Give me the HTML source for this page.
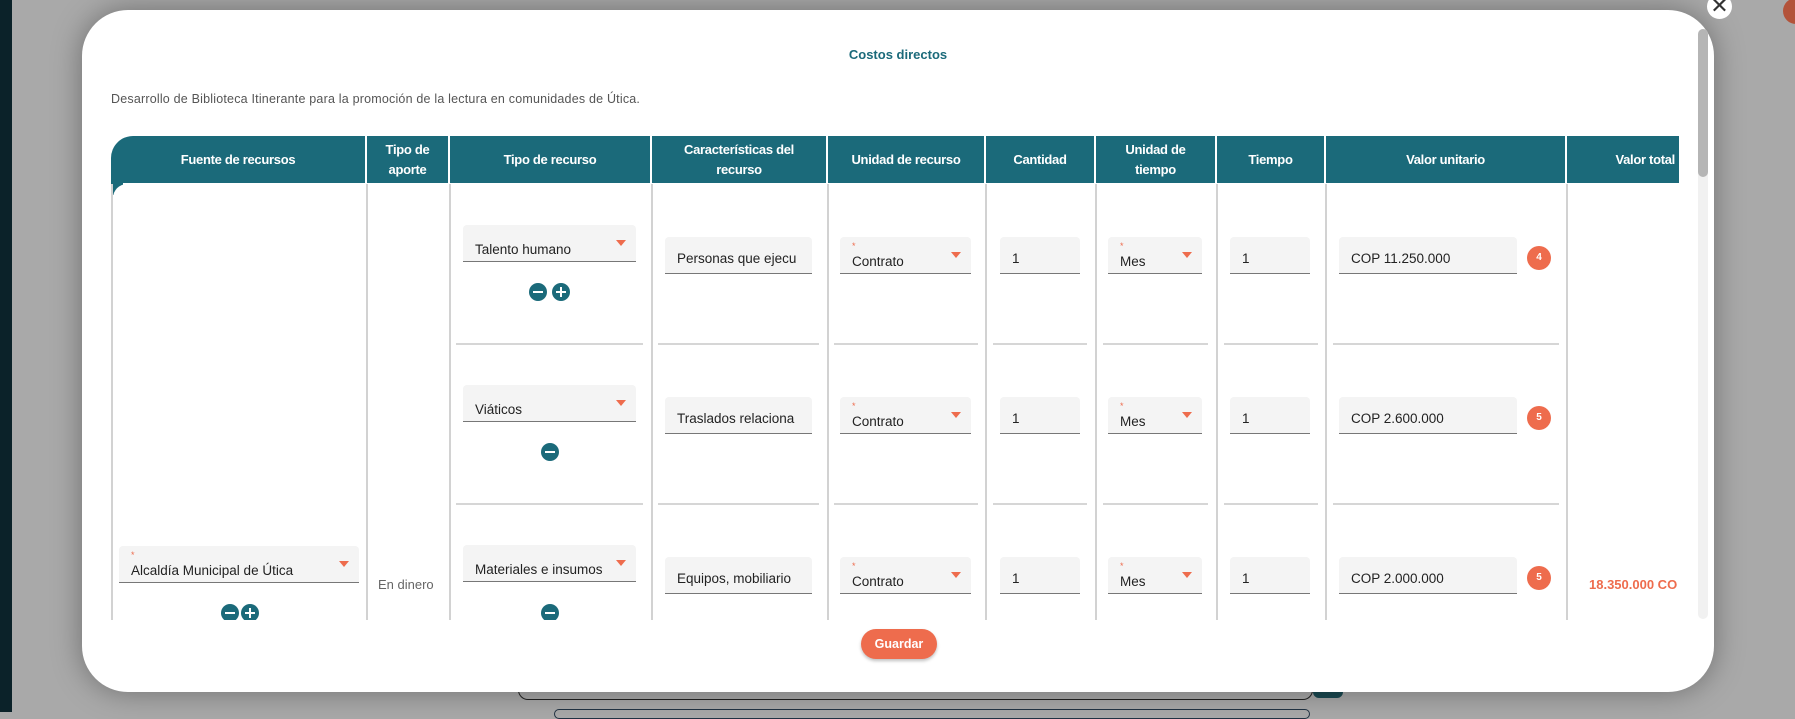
<!DOCTYPE html>
<html><head><meta charset="utf-8">
<style>
*{margin:0;padding:0;box-sizing:border-box}
body{width:1795px;height:712px;overflow:hidden;background:#a9a9a9;font-family:"Liberation Sans",sans-serif;position:relative}
.a{position:absolute}
.modal{left:82px;top:10px;width:1632px;height:682px;background:#fff;border-radius:46px;box-shadow:0 0 30px rgba(0,0,0,.35)}
.hd{background:#1b6a7a;color:#fff;font-weight:bold;font-size:13px;letter-spacing:-0.3px;display:flex;align-items:center;justify-content:center;text-align:center;line-height:20px;top:136px;height:47px}
.vl{width:2px;background:#d2d2d2;top:184px;height:436px}
.hl{height:2px;background:#d6d6d6}
.in{background:#f4f4f4;border-bottom:1.5px solid #777;border-radius:4px 4px 0 0;font-size:13.5px;color:#222;padding-left:12px;height:37px;line-height:44px;white-space:nowrap;overflow:hidden}
.sel{line-height:49px}
.sel:after{content:"";position:absolute;right:10px;top:15px;border-left:5px solid transparent;border-right:5px solid transparent;border-top:6px solid #ee6c4d}
.st:before{content:"*";position:absolute;left:12px;top:-16px;color:#ee6c4d;font-size:9px}
.ic{width:18px;height:18px;border-radius:50%;background:#1b6a7a}
.ic:before{content:"";position:absolute;left:4px;top:8px;width:10px;height:2.4px;background:#fff}
.pl:after{content:"";position:absolute;left:7.8px;top:4px;width:2.4px;height:10px;background:#fff}
.bd{width:24px;height:24px;border-radius:50%;background:#ee6c4d;color:#fff;font-size:10px;font-weight:bold;text-align:center;line-height:24px}
</style></head><body>
<div class="a" style="left:0;top:0;width:12px;height:712px;background:#0b2229"></div>
<div class="a" style="left:518px;top:688px;width:795px;height:12px;border:1.5px solid #222;border-top:none;border-radius:0 0 10px 10px"></div>
<div class="a" style="left:1313px;top:688px;width:30px;height:10px;background:#1b4a52;border-radius:0 0 6px 6px"></div>
<div class="a" style="left:554px;top:709px;width:756px;height:10px;border:1.5px solid #234;border-radius:8px"></div>
<div class="a" style="left:1783px;top:-2px;width:26px;height:26px;border-radius:50%;background:#b3533a"></div>
<div class="a modal"></div>
<div class="a" style="left:1707px;top:-6px;width:25px;height:25px;border-radius:50%;background:#fff;color:#333;font-size:22px;text-align:center;line-height:24px">✕</div>
<div class="a" style="left:1698px;top:29px;width:10px;height:590px;background:#f1f1f1;border-radius:5px"></div>
<div class="a" style="left:1698px;top:29px;width:10px;height:148px;background:#b5b5b5;border-radius:5px"></div>
<div class="a" style="left:82px;top:47px;width:1632px;text-align:center;color:#1b6a7a;font-weight:bold;font-size:13px">Costos directos</div>
<div class="a" style="left:111px;top:92px;color:#555;font-size:12.5px;letter-spacing:0.2px">Desarrollo de Biblioteca Itinerante para la promoción de la lectura en comunidades de Útica.</div>

<div class="a hd" style="left:111px;width:254px;border-radius:22px 0 0 0">Fuente de recursos</div>
<div class="a hd" style="left:367px;width:81px">Tipo de<br>aporte</div>
<div class="a hd" style="left:450px;width:200px">Tipo de recurso</div>
<div class="a hd" style="left:652px;width:174px">Características del<br>recurso</div>
<div class="a hd" style="left:828px;width:156px">Unidad de recurso</div>
<div class="a hd" style="left:986px;width:108px">Cantidad</div>
<div class="a hd" style="left:1096px;width:119px">Unidad de<br>tiempo</div>
<div class="a hd" style="left:1217px;width:107px">Tiempo</div>
<div class="a hd" style="left:1326px;width:239px">Valor unitario</div>
<div class="a hd" style="left:1567px;width:112px;justify-content:flex-end;padding-right:4px">Valor total</div>
<div class="a" style="left:111px;top:183px;width:12px;height:12px;background:#1b6a7a"></div>
<div class="a" style="left:113px;top:184px;width:30px;height:30px;background:#fff;border-radius:14px 0 0 0"></div>

<div class="a vl" style="left:111px"></div>
<div class="a vl" style="left:366px"></div>
<div class="a vl" style="left:449px"></div>
<div class="a vl" style="left:651px"></div>
<div class="a vl" style="left:827px"></div>
<div class="a vl" style="left:985px"></div>
<div class="a vl" style="left:1095px"></div>
<div class="a vl" style="left:1216px"></div>
<div class="a vl" style="left:1325px"></div>
<div class="a vl" style="left:1566px"></div>

<div class="a hl" style="top:343px;left:456px;width:187px"></div><div class="a hl" style="top:343px;left:658px;width:161px"></div><div class="a hl" style="top:343px;left:834px;width:144px"></div><div class="a hl" style="top:343px;left:993px;width:94px"></div><div class="a hl" style="top:343px;left:1103px;width:105px"></div><div class="a hl" style="top:343px;left:1224px;width:94px"></div><div class="a hl" style="top:343px;left:1333px;width:226px"></div>
<div class="a hl" style="top:503px;left:456px;width:187px"></div><div class="a hl" style="top:503px;left:658px;width:161px"></div><div class="a hl" style="top:503px;left:834px;width:144px"></div><div class="a hl" style="top:503px;left:993px;width:94px"></div><div class="a hl" style="top:503px;left:1103px;width:105px"></div><div class="a hl" style="top:503px;left:1224px;width:94px"></div><div class="a hl" style="top:503px;left:1333px;width:226px"></div>

<div class="a in sel" style="left:463px;top:225px;width:173px">Talento humano</div>
<div class="a ic" style="left:529px;top:283px"></div><div class="a ic pl" style="left:552px;top:283px"></div>
<div class="a in" style="left:665px;top:237px;width:147px">Personas que ejecu</div>
<div class="a in sel st" style="left:840px;top:237px;width:131px;line-height:50px">Contrato</div>
<div class="a in" style="left:1000px;top:237px;width:80px">1</div>
<div class="a in sel st" style="left:1108px;top:237px;width:94px;line-height:50px">Mes</div>
<div class="a in" style="left:1230px;top:237px;width:80px">1</div>
<div class="a in" style="left:1339px;top:237px;width:178px">COP 11.250.000</div>
<div class="a bd" style="left:1527px;top:246px">4</div>

<div class="a in sel" style="left:463px;top:385px;width:173px">Viáticos</div>
<div class="a ic" style="left:541px;top:443px"></div>
<div class="a in" style="left:665px;top:397px;width:147px">Traslados relaciona</div>
<div class="a in sel st" style="left:840px;top:397px;width:131px;line-height:50px">Contrato</div>
<div class="a in" style="left:1000px;top:397px;width:80px">1</div>
<div class="a in sel st" style="left:1108px;top:397px;width:94px;line-height:50px">Mes</div>
<div class="a in" style="left:1230px;top:397px;width:80px">1</div>
<div class="a in" style="left:1339px;top:397px;width:178px">COP 2.600.000</div>
<div class="a bd" style="left:1527px;top:406px">5</div>

<div class="a in sel" style="left:463px;top:545px;width:173px">Materiales e insumos</div>
<div class="a in" style="left:665px;top:557px;width:147px">Equipos, mobiliario</div>
<div class="a in sel st" style="left:840px;top:557px;width:131px;line-height:50px">Contrato</div>
<div class="a in" style="left:1000px;top:557px;width:80px">1</div>
<div class="a in sel st" style="left:1108px;top:557px;width:94px;line-height:50px">Mes</div>
<div class="a in" style="left:1230px;top:557px;width:80px">1</div>
<div class="a in" style="left:1339px;top:557px;width:178px">COP 2.000.000</div>
<div class="a bd" style="left:1527px;top:566px">5</div>

<div class="a in sel st" style="left:119px;top:546px;width:240px;line-height:50px">Alcaldía Municipal de Útica</div>
<div class="a" style="left:378px;top:577px;color:#666;font-size:13px">En dinero</div>
<div class="a" style="left:1589px;top:577px;color:#ee6c4d;font-weight:bold;font-size:13px;width:88px;overflow:hidden;white-space:nowrap">18.350.000 COP</div>

<div class="a" style="left:100px;top:604px;width:1570px;height:16px;overflow:hidden">
 <div class="a ic" style="left:121px;top:0px"></div><div class="a ic pl" style="left:141px;top:0px"></div>
 <div class="a ic" style="left:441px;top:0px"></div>
</div>
<div class="a" style="left:861px;top:629px;width:76px;height:30px;border-radius:15px;background:#ee6c4d;color:#fff;font-weight:bold;font-size:12.5px;text-align:center;line-height:30px;box-shadow:0 2px 3px rgba(0,0,0,.25)">Guardar</div>
</body></html>
